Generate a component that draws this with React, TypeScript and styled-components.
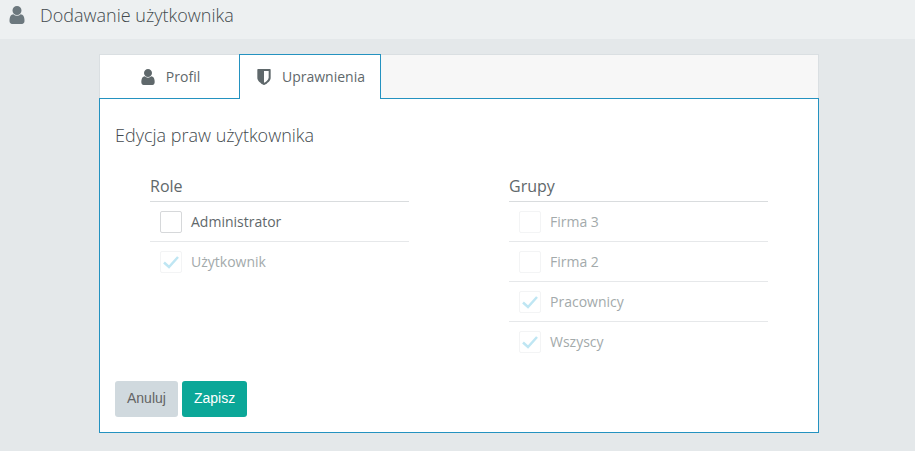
import React, { useState } from "react";
import styled, { createGlobalStyle, css } from "styled-components";

const accent = "#2492c0";
const sans = '"Open Sans", "Noto Sans", sans-serif';

const GlobalStyle = createGlobalStyle`
  *, *::before, *::after { box-sizing: border-box; }
  body {
    margin: 0;
    background: #e4e8ea;
    color: #5f686b;
    font: 14px/20px ${sans};
  }
`;

const PageHeader = styled.header`
  display: flex;
  align-items: center;
  gap: 15px;
  height: 39px;
  padding: 0 9px 9px;
  background: #edf0f1;
`;

const PageTitle = styled.h1`
  margin: 0;
  font-size: 18px;
  line-height: 30px;
  font-weight: 300;
  color: #434a4e;
`;

const Icon = styled.svg<{ $width: number; $height: number }>`
  flex: none;
  display: block;
  width: ${(p) => p.$width}px;
  height: ${(p) => p.$height}px;
  fill: currentColor;
`;

const HeaderMark = styled.span`
  color: #6c787e;
`;

const Main = styled.main`
  padding: 15px 96px 18px 99px;
`;

const TabBar = styled.div`
  display: flex;
  height: 44px;
  background: #f7f7f7;
  border: 1px solid #dadfe2;
  border-bottom: 0;
`;

const Tab = styled.button<{ $active: boolean }>`
  display: flex;
  align-items: center;
  justify-content: center;
  gap: 11px;
  height: 43px;
  padding: 0 15px 0 17px;
  min-width: 139px;
  border: 0;
  background: #fff;
  color: #5f686b;
  font: 14px/20px ${sans};
  cursor: pointer;

  ${(p) =>
    p.$active &&
    css`
      z-index: 1;
      height: 45px;
      margin-top: -1px;
      padding-bottom: 1px;
      border: 1px solid ${accent};
      border-bottom: 0;
    `}
`;

const Panel = styled.section`
  padding: 21px 0 15px;
  border: 1px solid ${accent};
  background: #fff;
`;

const PanelTitle = styled.h2`
  margin: 0 15px;
  font-size: 18px;
  line-height: 30px;
  font-weight: 300;
  color: #434a4e;
`;

const Columns = styled.div`
  display: grid;
  grid-template-columns: 1fr 1fr;
  padding: 24px 0 19px;
`;

const Group = styled.fieldset`
  min-width: 0;
  margin: 0;
  padding: 0 50px;
  border: 0;
`;

const GroupTitle = styled.legend`
  width: 100%;
  padding: 0 0 3px;
  border-bottom: 1px solid #d9dcde;
  font-size: 16px;
  line-height: 24px;
`;

const Option = styled.label<{ $disabled: boolean }>`
  display: flex;
  align-items: center;
  gap: 9px;
  height: 40px;
  padding: 0 10px;
  color: ${(p) => (p.$disabled ? "#a3aaab" : "#5f686b")};

  &:not(:last-child) {
    border-bottom: 1px solid #e6e8ea;
  }
`;

const CheckHolder = styled.span`
  display: grid;
  place-items: center;
  width: 22px;
  height: 22px;

  > * { grid-area: 1 / 1; }
`;

const CheckInput = styled.input`
  appearance: none;
  width: 22px;
  height: 22px;
  margin: 0;
  border: 1px solid #d6d8da;
  border-radius: 2px;
  background: #fff;

  &:disabled { border-color: #f3f4f5; }
`;

const CheckMark = styled.svg<{ $disabled: boolean }>`
  width: 18px;
  height: 16px;
  pointer-events: none;
  fill: none;
  stroke: ${(p) => (p.$disabled ? "#bfe6f3" : "#35b5dc")};
  stroke-width: 2.5;
`;

const Actions = styled.div`
  display: flex;
  gap: 4px;
  padding: 0 15px;
`;

const Button = styled.button<{ $primary?: boolean }>`
  height: 36px;
  padding: 7px 12px 9px;
  border: 0;
  border-radius: 3px;
  background: ${(p) => (p.$primary ? "#0ba798" : "#d0d9de")};
  color: ${(p) => (p.$primary ? "#fff" : "#646464")};
  font: 14px/20px "Liberation Sans", Arial, sans-serif;
  cursor: pointer;
`;

const UserIcon = ({ width, height }: { width: number; height: number }) => (
  <Icon $width={width} $height={height} viewBox="256 128 1280 1536" aria-hidden="true">
    <path d="M1536 1399q0 109-62.5 187t-150.5 78h-854q-88 0-150.5-78t-62.5-187q0-85 8.5-160.5t31.5-152 58.5-131 94-89 134.5-34.5q131 128 313 128t313-128q76 0 134.5 34.5t94 89 58.5 131 31.5 152 8.5 160.5zm-256-887q0 159-112.5 271.5t-271.5 112.5-271.5-112.5-112.5-271.5 112.5-271.5 271.5-112.5 271.5 112.5 112.5 271.5z" />
  </Icon>
);

const ShieldIcon = () => (
  <Icon $width={14} $height={16} viewBox="256 128 1280 1536" aria-hidden="true">
    <path d="M1344 960v-640h-448v1137q119-63 213-137 235-184 235-360zm192-768v768q0 86-33.5 170.5t-83 150-118 127.5-126.5 103-121 77.5-89.5 49.5-42.5 20q-12 6-26 6t-26-6q-16-7-42.5-20t-89.5-49.5-121-77.5-126.5-103-118-127.5-83-150-33.5-170.5v-768q0-26 19-45t45-19h1152q26 0 45 19t19 45z" />
  </Icon>
);

type Item = { label: string; checked?: boolean; disabled?: boolean };

const roles: Item[] = [
  { label: "Administrator" },
  { label: "Użytkownik", checked: true, disabled: true },
];

const groups: Item[] = [
  { label: "Firma 3", disabled: true },
  { label: "Firma 2", disabled: true },
  { label: "Pracownicy", checked: true, disabled: true },
  { label: "Wszyscy", checked: true, disabled: true },
];

function CheckOption({ label, checked = false, disabled = false }: Item) {
  const [on, setOn] = useState(checked);
  return (
    <Option $disabled={disabled}>
      <CheckHolder>
        <CheckInput
          type="checkbox"
          checked={on}
          disabled={disabled}
          onChange={(e) => setOn(e.target.checked)}
        />
        {on && (
          <CheckMark $disabled={disabled} viewBox="0 0 18 16" aria-hidden="true">
            <path d="M2 8.5L7 13L16 3" />
          </CheckMark>
        )}
      </CheckHolder>
      {label}
    </Option>
  );
}

function CheckGroup({ title, items }: { title: string; items: Item[] }) {
  return (
    <Group>
      <GroupTitle>{title}</GroupTitle>
      {items.map((item) => (
        <CheckOption key={item.label} {...item} />
      ))}
    </Group>
  );
}

export default function App() {
  return (
    <>
      <GlobalStyle />
      <PageHeader>
        <HeaderMark>
          <UserIcon width={16} height={18} />
        </HeaderMark>
        <PageTitle>Dodawanie użytkownika</PageTitle>
      </PageHeader>
      <Main>
        <TabBar role="tablist">
          <Tab type="button" role="tab" aria-selected={false} $active={false}>
            <UserIcon width={14} height={16} />
            Profil
          </Tab>
          <Tab type="button" role="tab" aria-selected={true} aria-controls="permissions" $active>
            <ShieldIcon />
            Uprawnienia
          </Tab>
        </TabBar>
        <Panel id="permissions" role="tabpanel">
          <PanelTitle>Edycja praw użytkownika</PanelTitle>
          <Columns>
            <CheckGroup title="Role" items={roles} />
            <CheckGroup title="Grupy" items={groups} />
          </Columns>
          <Actions>
            <Button type="button">Anuluj</Button>
            <Button type="button" $primary>
              Zapisz
            </Button>
          </Actions>
        </Panel>
      </Main>
    </>
  );
}
